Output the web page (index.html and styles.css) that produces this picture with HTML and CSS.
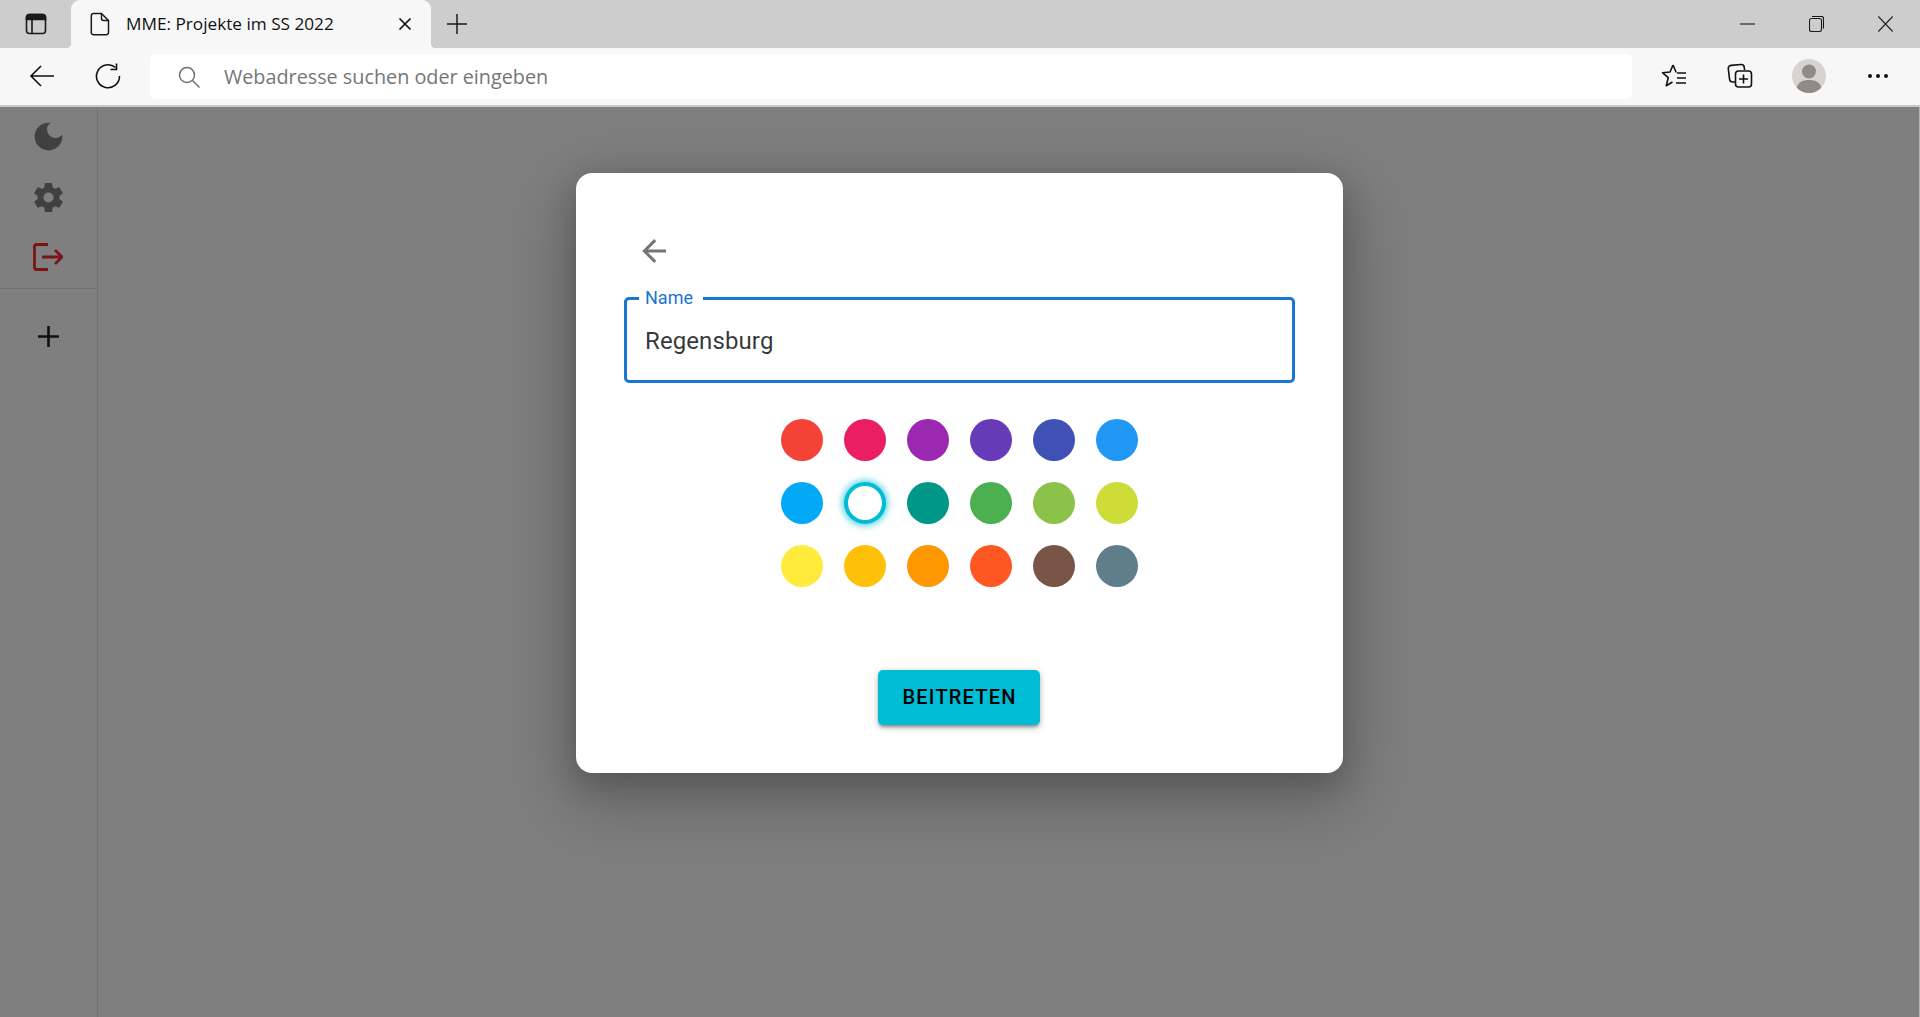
FILE: index.html
```html
<!DOCTYPE html>
<html lang="de">
<head>
    <meta charset="UTF-8">
    <meta name="viewport" content="width=device-width, initial-scale=1.0">
    <title>MME: Projekte im SS 2022</title>
    <link rel="stylesheet" href="styles.css">
</head>
<body>
    <div class="tabstrip">
        <div class="tab-toggle">
            <svg width="24" height="24" viewBox="0 0 24 24" fill="none" stroke="#1a1a1a" stroke-width="1.6">
                <rect x="2.5" y="2.5" width="19" height="19" rx="3"/>
                <path d="M2.5 5.5a3 3 0 0 1 3-3h13a3 3 0 0 1 3 3v2h-19z" fill="#1a1a1a"/>
                <path d="M8 7v14"/>
            </svg>
        </div>
        <div class="tab">
            <svg class="tab-doc" width="20" height="24" viewBox="0 0 20 24" fill="none" stroke="#1a1a1a" stroke-width="1.5" stroke-linejoin="round">
                <path d="M3.5 1.5h8l7 7v12a2.200 2.200 0 0 1-2.200 2.200H3.500a2.200 2.200 0 0 1-2.200-2.200V3.700a2.200 2.200 0 0 1 2.200-2.200z"/>
                <path d="M11.500 1.500v5a2 2 0 0 0 2 2h5"/>
            </svg>
            <span class="tab-title">MME: Projekte im SS 2022</span>
            <svg width="14" height="14" viewBox="0 0 14 14" fill="none" stroke="#111" stroke-width="1.700">
                <path d="M1.500 1.500l11 11M12.500 1.500l-11 11"/>
            </svg>
        </div>
        <div class="new-tab">
            <svg width="22" height="22" viewBox="0 0 22 22" fill="none" stroke="#1a1a1a" stroke-width="1.500">
                <path d="M11 1v20M1 11h20"/>
            </svg>
        </div>
        <div class="window-controls">
            <svg width="15" height="16" viewBox="0 0 15 16" fill="none" stroke="#1a1a1a" stroke-width="1.100">
                <path d="M0 8h15"/>
            </svg>
            <svg width="15" height="16" viewBox="0 0 15 16" fill="none" stroke="#1a1a1a" stroke-width="1.100">
                <rect x="0.500" y="2.500" width="12" height="13" rx="2"/>
                <path d="M3 0.500h9.500a2 2 0 0 1 2 2v10"/>
            </svg>
            <svg width="15" height="16" viewBox="0 0 15 16" fill="none" stroke="#1a1a1a" stroke-width="1.100">
                <path d="M0.300 0.500l14.400 15M14.700 0.500l-14.400 15"/>
            </svg>
        </div>
    </div>

    <div class="toolbar">
        <div class="nav-btn nav-back">
            <svg width="26" height="24" viewBox="0 0 26 24" fill="none" stroke="#111" stroke-width="1.600">
                <path d="M25 12H2M12 2L2 12l10 10"/>
            </svg>
        </div>
        <div class="nav-btn nav-reload">
            <svg width="26" height="26" viewBox="0 0 26 26" fill="none" stroke="#111" stroke-width="1.600">
                <path d="M20.500 4.500A11.500 11.500 0 1 0 24.500 13"/>
                <path d="M21.500 0.500v6h-6"/>
            </svg>
        </div>
        <div class="address">
            <svg width="22" height="22" viewBox="0 0 22 22" fill="none" stroke="#6f6f6f" stroke-width="1.500">
                <circle cx="9" cy="9" r="7.500"/>
                <path d="M14.500 14.500l7 7"/>
            </svg>
            <span>Webadresse suchen oder eingeben</span>
        </div>
        <div class="toolbar-icons">
            <svg class="icon-fav" width="26" height="26" viewBox="0 0 26 26" fill="none" stroke="#111" stroke-width="1.600" stroke-linejoin="round">
                <path d="M12 2l3 7h0.500M12 2L9 9l-7.500 0.700 5.700 5-1.900 8 6.200-3.700"/>
                <path d="M16 10h9M16 15h9M15 20h10"/>
            </svg>
            <svg class="icon-coll" width="26" height="28" viewBox="0 0 26 28" fill="none" stroke="#111" stroke-width="1.600">
                <path d="M8 20H5.500A3 3 0 0 1 2.600 17.400L1.300 6.800A3 3 0 0 1 4 3.400L14 2.500a3 3 0 0 1 3.200 2.500l0.400 3"/>
                <rect x="8.500" y="9" width="16" height="16" rx="3"/>
                <path d="M16.500 12.500v9M12 17h9"/>
            </svg>
            <div class="avatar">
                <svg width="34" height="34" viewBox="0 0 34 34" fill="#8f8c88">
                    <circle cx="17" cy="12.500" r="7"/>
                    <path d="M4.500 29.500c1-6 6-8.500 12.500-8.500s11.500 2.500 12.500 8.500a17 17 0 0 1-25 0z"/>
                </svg>
            </div>
            <svg class="icon-more" width="22" height="6" viewBox="0 0 22 6" fill="#111">
                <circle cx="3" cy="3" r="2"/>
                <circle cx="11" cy="3" r="2"/>
                <circle cx="19" cy="3" r="2"/>
            </svg>
        </div>
    </div>

    <div class="app">
        <nav class="sidebar">
            <div class="side-btn">
                <svg class="side-moon" width="37" height="37" viewBox="0 0 24 24" fill="#404040">
                    <path d="M12 3a9 9 0 1 0 9 9c0-.46-.04-.92-.1-1.360a5.389 5.389 0 0 1-4.400 2.260 5.403 5.403 0 0 1-3.140-9.800c-.44-.06-.9-.1-1.360-.1z"/>
                </svg>
            </div>
            <div class="side-btn">
                <svg width="35" height="35" viewBox="0 0 24 24" fill="#404040">
                    <path d="M12,15.500A3.500,3.500 0 0,1 8.500,12A3.500,3.500 0 0,1 12,8.500A3.500,3.500 0 0,1 15.500,12A3.500,3.500 0 0,1 12,15.500M19.430,12.970C19.470,12.650 19.500,12.330 19.500,12C19.500,11.670 19.470,11.340 19.430,11L21.540,9.370C21.730,9.220 21.780,8.950 21.660,8.730L19.660,5.270C19.540,5.050 19.270,4.960 19.050,5.050L16.560,6.050C16.040,5.660 15.500,5.320 14.870,5.070L14.500,2.420C14.460,2.180 14.250,2 14,2H10C9.750,2 9.540,2.180 9.500,2.420L9.130,5.070C8.500,5.320 7.960,5.660 7.440,6.050L4.950,5.050C4.730,4.960 4.460,5.050 4.340,5.270L2.340,8.730C2.210,8.950 2.270,9.220 2.460,9.370L4.570,11C4.530,11.340 4.500,11.670 4.500,12C4.500,12.330 4.530,12.650 4.570,12.970L2.460,14.630C2.270,14.780 2.210,15.050 2.340,15.270L4.340,18.730C4.460,18.950 4.730,19.030 4.950,18.950L7.440,17.940C7.960,18.340 8.500,18.680 9.130,18.930L9.500,21.580C9.540,21.820 9.750,22 10,22H14C14.250,22 14.460,21.820 14.500,21.580L14.870,18.930C15.500,18.670 16.040,18.340 16.560,17.940L19.050,18.950C19.270,19.030 19.540,18.950 19.660,18.730L21.660,15.270C21.780,15.050 21.730,14.780 21.540,14.630L19.430,12.970Z"/>
                </svg>
            </div>
            <div class="side-btn">
                <svg width="30" height="28" viewBox="0 0 30 28" fill="none" stroke="#7a1416" stroke-width="2.800">
                    <path d="M15 1.500H3.500a2 2 0 0 0-2 2v21a2 2 0 0 0 2 2H15"/>
                    <path d="M9 14h19.500M22 7l7 7-7 7"/>
                </svg>
            </div>
            <div class="side-divider"></div>
            <div class="side-btn side-add">
                <svg width="21" height="21" viewBox="0 0 21 21" fill="none" stroke="#111" stroke-width="2.600">
                    <path d="M10.500 0v21M0 10.500h21"/>
                </svg>
            </div>
        </nav>

        <div class="overlay">
            <div class="dialog">
                <div class="dialog-back">
                    <svg width="36" height="36" viewBox="0 0 24 24" fill="#757575">
                        <path d="M20,11V13H8L13.500,18.500L12.080,19.920L4.160,12L12.080,4.080L13.500,5.500L8,11H20Z"/>
                    </svg>
                </div>
                <fieldset class="name-field">
                    <legend>Name</legend>
                    <span>Regensburg</span>
                </fieldset>
                <div class="swatches">
                    <span class="swatch red"></span>
                    <span class="swatch pink"></span>
                    <span class="swatch purple"></span>
                    <span class="swatch deep-purple"></span>
                    <span class="swatch indigo"></span>
                    <span class="swatch blue"></span>
                    <span class="swatch light-blue"></span>
                    <span class="swatch selected"></span>
                    <span class="swatch teal"></span>
                    <span class="swatch green"></span>
                    <span class="swatch light-green"></span>
                    <span class="swatch lime"></span>
                    <span class="swatch yellow"></span>
                    <span class="swatch amber"></span>
                    <span class="swatch orange"></span>
                    <span class="swatch deep-orange"></span>
                    <span class="swatch brown"></span>
                    <span class="swatch blue-grey"></span>
                </div>
                <button class="join-btn">BEITRETEN</button>
            </div>
        </div>
    </div>
</body>
</html>
```

FILE: styles.css
```css
* {
    box-sizing: border-box;
}

html, body {
    height: 100%;
}

body {
    margin: 0;
    display: flex;
    flex-direction: column;
    overflow: hidden;
    font-family: Roboto, sans-serif;
    background-color: #7f7f7f;
}

svg {
    display: block;
    flex: none;
}

/* browser chrome */
.tabstrip {
    height: 48px;
    flex: none;
    display: flex;
    background-color: #cdcdcd;
}

.tab-toggle {
    width: 71px;
    display: flex;
    align-items: center;
    justify-content: center;
}

.tab {
    position: relative;
    width: 360px;
    display: flex;
    align-items: center;
    padding: 0 19px 0 19px;
    background-color: #f7f7f7;
    border-radius: 9px 9px 0 0;
}

/* little flares at the foot of the active tab */
.tab::before,
.tab::after {
    content: "";
    position: absolute;
    bottom: 0;
    width: 5px;
    height: 5px;
}

.tab::before {
    left: -5px;
    background: radial-gradient(circle at 0 0, transparent 5px, #f7f7f7 5.500px);
}

.tab::after {
    right: -5px;
    background: radial-gradient(circle at 100% 0, transparent 5px, #f7f7f7 5.500px);
}

.tab-doc {
    margin-right: 16px;
}

.tab-title {
    flex: 1;
    padding-bottom: 2px;
    font-family: "Open Sans", sans-serif;
    font-size: 17.200px;
    color: #111;
    white-space: nowrap;
}

.new-tab {
    width: 52px;
    display: flex;
    align-items: center;
    justify-content: center;
}

.window-controls {
    margin-left: auto;
    display: flex;
    align-items: center;
    gap: 54px;
    padding: 0 27px 0 0;
}

.toolbar {
    height: 59px;
    flex: none;
    display: flex;
    align-items: flex-start;
    background-color: #f7f7f7;
    border-bottom: 2px solid #c9c9c9;
}

.nav-btn {
    height: 56px;
    display: flex;
    align-items: center;
}

.nav-back {
    width: 95px;
    padding-left: 29px;
}

.nav-reload {
    width: 55px;
}

.address {
    width: 1482px;
    height: 45px;
    margin-top: 6px;
    display: flex;
    align-items: center;
    gap: 24px;
    padding-left: 28px;
    background-color: #fff;
    border-radius: 5px;
    font-family: "Open Sans", sans-serif;
    font-size: 19.800px;
    color: #767676;
}

.toolbar-icons {
    flex: 1;
    height: 56px;
    display: flex;
    align-items: center;
    padding-left: 29px;
}

.icon-coll {
    margin-left: 40px;
}

.avatar {
    width: 34px;
    height: 34px;
    margin-left: 39px;
    border-radius: 50%;
    background-color: #d6d4d0;
    overflow: hidden;
}

.icon-more {
    margin-left: 41px;
}

/* app below the browser bars */
.app {
    flex: 1;
    position: relative;
    display: flex;
    border-right: 1px solid #b4b4b4;
}

.sidebar {
    width: 98px;
    flex: none;
    border-right: 1px solid #717171;
}

.side-btn {
    height: 60px;
    display: flex;
    align-items: center;
    justify-content: center;
    padding-right: 1px;
}

.side-moon {
    margin-bottom: 1px;
}

.side-divider {
    height: 1px;
    margin-top: 1px;
    background-color: #717171;
}

.side-add {
    margin-top: 17px;
}

.overlay {
    position: absolute;
    inset: 0;
    display: flex;
    justify-content: center;
    align-items: flex-start;
    padding-top: 66px;
}

.dialog {
    width: 767px;
    height: 600px;
    display: flex;
    flex-direction: column;
    align-items: center;
    padding: 48px 48px 0;
    background-color: #fff;
    border-radius: 16px;
    box-shadow: 0 24px 70px 12px rgba(0, 0, 0, 0.2), 0 10px 30px 2px rgba(0, 0, 0, 0.18);
}

.dialog-back {
    align-self: flex-start;
    height: 36px;
    margin-left: 12px;
    margin-top: 12px;
}

.name-field {
    width: 671px;
    height: 94px;
    margin: 20px 0 0;
    padding: 0;
    border: 3px solid #1976d2;
    border-radius: 5px;
    font-size: 24px;
    letter-spacing: 0.100px;
    color: rgba(0, 0, 0, 0.8);
}

.name-field legend {
    padding: 0 10px 0 6px;
    margin-left: 12px;
    font-size: 18px;
    line-height: 18px;
    letter-spacing: 0;
    color: #1976d2;
}

.name-field span {
    display: block;
    margin: 20px 0 0 18px;
}

.swatches {
    display: grid;
    grid-template-columns: repeat(6, 42px);
    gap: 21px;
    margin-top: 36px;
}

.swatch {
    width: 42px;
    height: 42px;
    border-radius: 50%;
}

.red { background-color: #f44336; }
.pink { background-color: #e91e63; }
.purple { background-color: #9c27b0; }
.deep-purple { background-color: #673ab7; }
.indigo { background-color: #3f51b5; }
.blue { background-color: #2196f3; }
.light-blue { background-color: #03a9f4; }
.teal { background-color: #009688; }
.green { background-color: #4caf50; }
.light-green { background-color: #8bc34a; }
.lime { background-color: #cddc39; }
.yellow { background-color: #ffeb3b; }
.amber { background-color: #ffc107; }
.orange { background-color: #ff9800; }
.deep-orange { background-color: #ff5722; }
.brown { background-color: #795548; }
.blue-grey { background-color: #607d8b; }

.selected {
    background-color: #fff;
    border: 4px solid #00bcd4;
    box-shadow: 0 0 6px 2px rgba(0, 188, 212, 0.65);
}

.join-btn {
    width: 162px;
    height: 55px;
    margin: 83px 1px 0 0;
    padding: 0 0 2px 1px;
    border: 0;
    border-radius: 5px;
    background-color: #00bcd4;
    color: #000;
    font-family: Roboto, sans-serif;
    font-size: 20px;
    font-weight: 500;
    letter-spacing: 1.200px;
    box-shadow: 0 3px 3px -1px rgba(0, 0, 0, 0.3), 0 3px 6px 0 rgba(0, 0, 0, 0.14), 0 1px 8px 0 rgba(0, 0, 0, 0.12);
}
```
